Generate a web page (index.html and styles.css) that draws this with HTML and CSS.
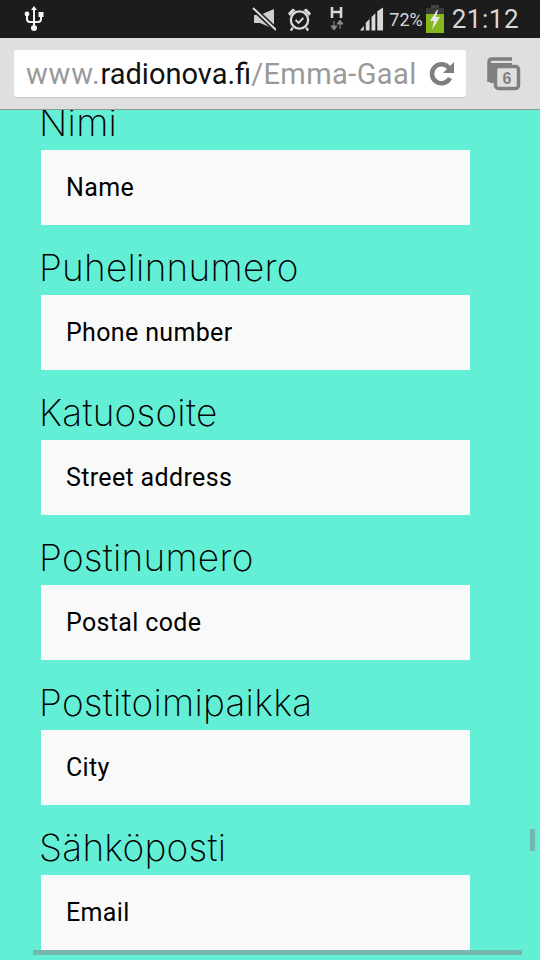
FILE: index.html
```html
<!DOCTYPE html>
<html lang="en">
<head>
    <meta charset="utf-8" />
    <title>Radio Nova</title>
    <link rel="stylesheet" href="styles.css">
</head>
<body>
    <div class="status-bar">
        <svg class="usb-icon" width="20" height="28" viewBox="0 0 20 28">
            <path d="M10 1l3 4h-2v15h-2V5H7z" fill="#f5f5f5"/>
            <circle cx="10" cy="23" r="3" fill="#f5f5f5"/>
            <path d="M3 10v4c0 2 1 3 3 3h3M17 10v4c0 2-1 3-3 3h-3" fill="none" stroke="#f5f5f5" stroke-width="2"/>
            <circle cx="3" cy="9" r="2.4" fill="#f5f5f5"/>
            <rect x="14.5" y="7" width="5" height="5" fill="#f5f5f5"/>
        </svg>
        <div class="status-right">
            <svg class="mute-icon" width="24" height="24" viewBox="0 0 24 24">
                <path d="M2 8h6l14-6v20L8 16H2z" fill="#cfcfcf"/>
                <path d="M0 0l24 23" stroke="#1c1c1c" stroke-width="5"/>
                <path d="M1 1l23 22" stroke="#d8d8d8" stroke-width="2"/>
            </svg>
            <svg class="alarm-icon" width="25" height="26" viewBox="0 0 26 26">
                <circle cx="13" cy="14" r="9" fill="none" stroke="#d8d8d8" stroke-width="2.4"/>
                <path d="M9 14l3 3 5-5" fill="none" stroke="#d8d8d8" stroke-width="2"/>
                <path d="M1 7l5-5 3 2-6 6zM25 7l-5-5-3 2 6 6z" fill="#d8d8d8"/>
                <path d="M6 22l-2 3M20 22l2 3" stroke="#d8d8d8" stroke-width="2.4"/>
            </svg>
            <svg class="network-icon" width="14" height="26" viewBox="0 0 14 26">
                <path d="M2 1v11M11 1v11M2 6h9" fill="none" stroke="#d8d8d8" stroke-width="2.6"/>
                <path d="M4 15v7M1 20l3 4 3-4z" fill="#8a8a8a" stroke="#8a8a8a"/>
                <path d="M10 23v-7M7 18l3-4 3 4z" fill="#8a8a8a" stroke="#8a8a8a"/>
            </svg>
            <svg class="signal-icon" width="24" height="24" viewBox="0 0 25 24">
                <path d="M0 24l4-5v5zM6 24v-8l4-4v12zM12 24V10l4-4v18zM18 24V4l6-4v24z" fill="#d8d8d8"/>
            </svg>
            <span class="battery-text">72%</span>
            <svg class="battery-icon" width="18" height="28" viewBox="0 0 18 28">
                <rect x="5" y="0" width="8" height="3" fill="#444"/>
                <rect x="0" y="3" width="18" height="6" fill="#3a3a3a"/>
                <rect x="0" y="9" width="18" height="19" fill="#84b71d"/>
                <path d="M11 5L4 16h4l-2 9 8-13h-4l2-7z" fill="#e8e8e8"/>
            </svg>
            <span class="clock">21:12</span>
        </div>
    </div>

    <div class="toolbar">
        <div class="url-box">
            <div class="url-text"><span class="url-dim url-host">www.</span>radionova.fi<span class="url-dim">/Emma-Gaal</span></div>
            <svg class="reload-icon" width="28" height="28" viewBox="0 0 28 28">
                <path d="M22 18a9.500 9.500 0 1 1-1-10" fill="none" stroke="#7f7f7f" stroke-width="4.500"/>
                <path d="M26 2v11H15z" fill="#7f7f7f"/>
            </svg>
        </div>
        <svg class="tabs-icon" width="34" height="34" viewBox="0 0 34 34">
            <path d="M2 25V5q0-3 3-3h20" fill="none" stroke="#7f7f7f" stroke-width="3.500"/>
            <path d="M3 6h22v3H9v17H3z" fill="#7f7f7f"/>
            <rect x="8.500" y="9.500" width="23" height="22" rx="3" fill="#dfdfdf" stroke="#7f7f7f" stroke-width="3.500"/>
            <text x="20" y="27" class="tabs-count">6</text>
        </svg>
    </div>

    <div class="page">
        <form class="form">
            <label class="field-label">Nimi</label>
            <div class="field">Name</div>
            <label class="field-label">Puhelinnumero</label>
            <div class="field">Phone number</div>
            <label class="field-label">Katuosoite</label>
            <div class="field">Street address</div>
            <label class="field-label">Postinumero</label>
            <div class="field">Postal code</div>
            <label class="field-label">Postitoimipaikka</label>
            <div class="field">City</div>
            <label class="field-label">Sähköposti</label>
            <div class="field">Email</div>
        </form>
        <div class="scroll-v"></div>
        <div class="scroll-h"></div>
    </div>
</body>
</html>
```

FILE: styles.css
```css
html, body {
    margin: 0;
    height: 960px;
    overflow: hidden;
}

body {
    font-family: Roboto, sans-serif;
    background-color: #62efd6;
    color: #000;
}

.status-bar {
    height: 38px;
    background-color: #1c1c1c;
    display: flex;
    align-items: center;
    justify-content: space-between;
    padding: 0 21px 0 24px;
}

.status-right {
    display: flex;
    align-items: center;
}

.mute-icon {
    margin-right: 11px;
}

.alarm-icon {
    margin-right: 18px;
}

.network-icon {
    margin-right: 16px;
}

.battery-text {
    font-size: 18px;
    color: #d8d8d8;
    margin: 0 3px 0 5px;
}

.clock {
    font-size: 26px;
    letter-spacing: 0.5px;
    color: #d8d8d8;
    margin-left: 8px;
}

.toolbar {
    height: 71px;
    background-color: #dfdfdf;
    border-bottom: 1px solid #8e9a98;
    display: flex;
    align-items: center;
    padding: 0 19px 0 14px;
    justify-content: space-between;
}

.url-box {
    width: 452px;
    height: 47px;
    box-sizing: border-box;
    background-color: #fff;
    border-radius: 3px;
    box-shadow: 0 1px 1px #c8c8c8;
    display: flex;
    align-items: center;
    justify-content: space-between;
    padding: 0 10px 0 12px;
}

.url-text {
    font-size: 29px;
    white-space: nowrap;
    color: #111;
}

.url-dim {
    color: #999;
    letter-spacing: 0.4px;
}

.url-host {
    letter-spacing: 0.8px;
}

.tabs-count {
    font-family: "Liberation Sans", sans-serif;
    font-size: 16px;
    font-weight: bold;
    fill: #7f7f7f;
    text-anchor: middle;
}

.page {
    position: relative;
    height: 850px;
    overflow: hidden;
}

.form {
    margin: 0 0 0 41px;
    width: 429px;
    padding-top: 0.4px;
}

.field-label {
    display: block;
    height: 40px;
    line-height: 25px;
    font-family: Inter, sans-serif;
    font-weight: 250;
    font-size: 37px;
    letter-spacing: 0.25px;
    margin-left: -2px;
}

.field {
    height: 75px;
    margin-bottom: 29.9px;
    background-color: #f9f9f9;
    box-sizing: border-box;
    padding-left: 25px;
    line-height: 76px;
    font-size: 25px;
    letter-spacing: 0.35px;
}

.scroll-v {
    position: absolute;
    right: 5px;
    top: 719px;
    width: 5px;
    height: 22px;
    background-color: #74b8ab;
}

.scroll-h {
    position: absolute;
    left: 33px;
    top: 840px;
    width: 489px;
    height: 5px;
    background-color: #74b8ab;
}
```
